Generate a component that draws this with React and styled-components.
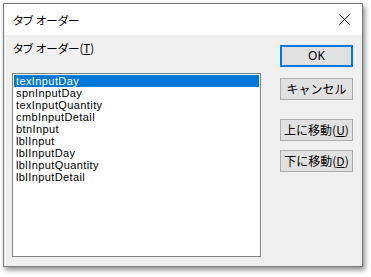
import React from "react";
import styled, { createGlobalStyle } from "styled-components";

const Global = createGlobalStyle`
  html, body { margin: 0; padding: 0; background: #ffffff; }
  body { font-family: "Noto Sans CJK JP", "Liberation Sans", sans-serif; }
  * { box-sizing: border-box; }
`;

const Page = styled.div`
  width: 371px;
  height: 277px;
  padding: 3px 0 0 3px;
  background: #ffffff;
`;

const Window = styled.div`
  width: 360px;
  height: 264px;
  border: 1px solid #7a7a7a;
  background: #f0f0f0;
  display: flex;
  flex-direction: column;
  box-shadow: 2px 3px 5px rgba(0, 0, 0, 0.45);
`;

const TitleBar = styled.div`
  height: 31px;
  flex: none;
  background: #ffffff;
  display: flex;
  align-items: center;
  justify-content: space-between;
  padding: 0 12px 0 9px;
`;

const TitleText = styled.span`
  font-family: "Noto Sans CJK JP", sans-serif;
  font-size: 11.5px;
  font-feature-settings: "palt";
  color: #000;
  line-height: 16px;
`;

const Body = styled.div`
  flex: 1;
  display: flex;
  padding: 0 9px 9px 8px;
`;

const LeftCol = styled.div`
  width: 249px;
  display: flex;
  flex-direction: column;
`;

const Label = styled.div`
  height: 38px;
  padding-top: 5px;
  padding-left: 1px;
  font-family: "Noto Sans CJK JP", sans-serif;
  font-size: 11.5px;
  font-feature-settings: "palt";
  line-height: 16px;
  color: #000;
`;

const ListBox = styled.div`
  flex: 1;
  border: 1px solid #828282;
  background: #ffffff;
  padding: 1px;
`;

const Item = styled.div`
  height: 12px;
  line-height: 12px;
  padding-left: 2px;
  font-family: "Liberation Sans", sans-serif;
  font-size: 11px;
  letter-spacing: 0.4px;
  white-space: nowrap;
  color: ${(p) => (p.$selected ? "#ffffff" : "#000000")};
  background: ${(p) => (p.$selected ? "#0078d7" : "transparent")};
`;

const RightCol = styled.div`
  margin-left: 19px;
  width: 73px;
  padding-top: 10px;
  display: flex;
  flex-direction: column;
`;

const Button = styled.button`
  width: 73px;
  height: 22px;
  margin: 0;
  margin-top: ${(p) => p.$mt || 0}px;
  padding: 0;
  background: #e1e1e1;
  border: ${(p) => (p.$default ? "2px solid #0078d7" : "1px solid #adadad")};
  font-family: ${(p) =>
    p.$latin ? '"Noto Sans", sans-serif' : '"Noto Sans CJK JP", sans-serif'};
  font-size: 12px;
  font-weight: 400;
  color: #000;
  line-height: 16px;
  white-space: nowrap;
  display: flex;
  align-items: center;
  justify-content: center;
`;

const CloseIcon = () => (
  <svg width="11" height="11" viewBox="0 0 11 11">
    <path d="M0.5 0.5 L10.5 10.5 M10.5 0.5 L0.5 10.5" stroke="#000" strokeWidth="1" fill="none" />
  </svg>
);

const items = [
  "texInputDay",
  "spnInputDay",
  "texInputQuantity",
  "cmbInputDetail",
  "btnInput",
  "lblInput",
  "lblInputDay",
  "lblInputQuantity",
  "lblInputDetail",
];

export default function App() {
  return (
    <Page>
      <Global />
      <Window>
        <TitleBar>
          <TitleText>タブ オーダー</TitleText>
          <CloseIcon />
        </TitleBar>
        <Body>
          <LeftCol>
            <Label>
              タブ オーダー(<u>T</u>)
            </Label>
            <ListBox>
              {items.map((it, i) => (
                <Item key={it} $selected={i === 0}>
                  {it}
                </Item>
              ))}
            </ListBox>
          </LeftCol>
          <RightCol>
            <Button $default $latin>OK</Button>
            <Button $mt={11}>キャンセル</Button>
            <Button $mt={19}>
              上に移動(<u>U</u>)
            </Button>
            <Button $mt={9}>
              下に移動(<u>D</u>)
            </Button>
          </RightCol>
        </Body>
      </Window>
    </Page>
  );
}
